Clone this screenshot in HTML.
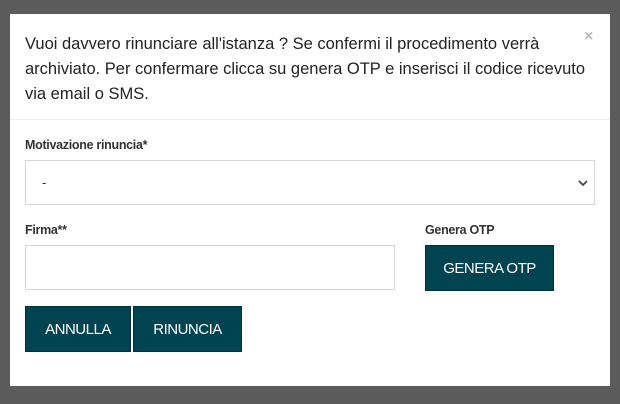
<!DOCTYPE html>
<html><head><style>
body{margin:0;width:620px;height:404px;background:#5b5b5b;font-family:"Liberation Sans",sans-serif;position:relative;overflow:hidden}
.m{position:absolute;left:10px;top:14px;width:600px;height:372px;background:#fff}
.h{position:absolute;left:15px;top:18px;width:580px;font-size:16.5px;line-height:25px;color:#222;letter-spacing:0px;white-space:nowrap}
.x{position:absolute;left:574px;top:14px;color:#bbb;font-size:16px;font-weight:bold}
.hr{position:absolute;left:0;top:105px;width:600px;height:1px;background:#eee}
.l{position:absolute;font-size:12.5px;font-weight:bold;color:#333;letter-spacing:-0.3px}
.f{position:absolute;border:1px solid #d3d6df;background:#fff;box-sizing:border-box}
.b{position:absolute;background:#004452;border:1px solid #002f38;color:#fff;font-size:15px;display:flex;align-items:center;justify-content:center;box-sizing:border-box;letter-spacing:-0.5px}
</style></head><body>
<div class="m">
<div class="h">Vuoi davvero rinunciare all'istanza ? Se confermi il procedimento verrà<br>archiviato. Per confermare clicca su genera OTP e inserisci il codice ricevuto<br>via email o SMS.</div>
<div class="x">×</div>
<div class="hr"></div>
<div class="l" style="left:15px;top:124px">Motivazione rinuncia*</div>
<div class="f" style="left:15px;top:146px;width:570px;height:45px"><span style="position:absolute;left:16px;top:14px;font-size:13px;color:#333">-</span><svg style="position:absolute;right:6px;top:18px" width="10" height="8" viewBox="0 0 10 8"><path d="M1 2l4 4 4-4" stroke="#444" stroke-width="1.8" fill="none"/></svg></div>
<div class="l" style="left:15px;top:209px">Firma**</div>
<div class="f" style="left:15px;top:231px;width:370px;height:45px"></div>
<div class="l" style="left:415px;top:209px">Genera OTP</div>
<div class="b" style="left:415px;top:231px;width:129px;height:46px">GENERA OTP</div>
<div class="b" style="left:15px;top:292px;width:106px;height:46px">ANNULLA</div>
<div class="b" style="left:123px;top:292px;width:109px;height:46px">RINUNCIA</div>
</div>
</body></html>
